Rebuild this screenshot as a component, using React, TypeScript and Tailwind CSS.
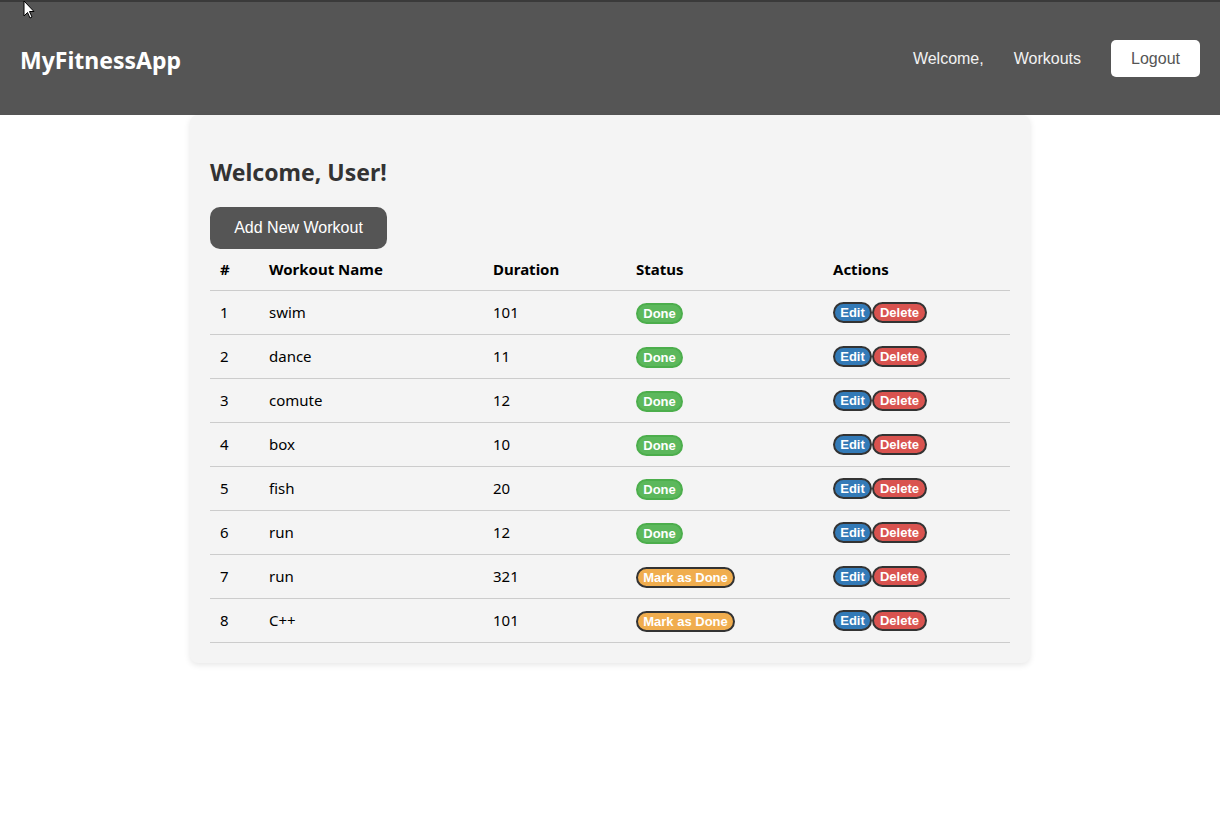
import React from "react"

type Workout = { id: number; name: string; duration: number; done: boolean }

const workouts: Workout[] = [
  { id: 1, name: "swim", duration: 101, done: true },
  { id: 2, name: "dance", duration: 11, done: true },
  { id: 3, name: "comute", duration: 12, done: true },
  { id: 4, name: "box", duration: 10, done: true },
  { id: 5, name: "fish", duration: 20, done: true },
  { id: 6, name: "run", duration: 12, done: true },
  { id: 7, name: "run", duration: 321, done: false },
  { id: 8, name: "C++", duration: 101, done: false },
]

const segoe = "font-['Segoe_UI','Noto_Sans',sans-serif]"
const arial = "font-['Liberation_Sans',Arial,sans-serif]"

function Pill({ className, children }: { className: string; children: React.ReactNode }) {
  return (
    <button
      className={`${arial} h-[21px] whitespace-nowrap rounded-full border-2 px-0 text-[13px] font-bold leading-none text-white ${className}`}
    >
      {children}
    </button>
  )
}

export default function App() {
  return (
    <div className="relative min-h-[834px] bg-white">
      <svg className="absolute left-[23px] top-0 z-10" width="12" height="19" viewBox="0 0 12 19">
        <path d="M1 1 L1 16 L4.5 12.5 L7 18 L9 17 L6.5 11.5 L11 11.5 Z" fill="#fff" stroke="#000" strokeWidth="1" />
      </svg>

      <header className="flex h-[115px] items-center justify-between border-t-2 border-[#3a3a3a] bg-[#555555] px-5">
        <h1 className={`${segoe} mt-1 text-[23px] font-bold text-white`}>MyFitnessApp</h1>
        <nav className={`${arial} flex items-center text-[16px] text-[#f2f2f2]`}>
          <a className="mr-[30px] mt-px">Welcome,</a>
          <a className="mr-[30px] mt-px">Workouts</a>
          <button className="h-[37px] w-[89px] rounded-[5px] bg-white text-[16px] text-[#555]">Logout</button>
        </nav>
      </header>

      <main className="mx-auto w-[840px] rounded-lg bg-[#f4f4f4] px-5 pb-5 pt-[40px] shadow-[0_2px_6px_rgba(0,0,0,0.1)]">
        <h2 className={`${segoe} text-[23px] font-bold leading-[34px] text-[#333]`}>Welcome, User!</h2>
        <button
          className={`${arial} mt-[18px] h-[42px] w-[177px] rounded-[10px] bg-[#555555] text-[16px] text-white`}
        >
          Add New Workout
        </button>

        <table className={`${segoe} w-full border-collapse text-[15px] text-black`}>
          <thead>
            <tr className="h-[41px] border-b border-[#cccccc] text-left">
              <th className="w-[49px] px-[10px] font-bold">#</th>
              <th className="w-[224px] px-[10px] font-bold">Workout Name</th>
              <th className="w-[143px] px-[10px] font-bold">Duration</th>
              <th className="w-[197px] px-[10px] font-bold">Status</th>
              <th className="px-[10px] font-bold">Actions</th>
            </tr>
          </thead>
          <tbody>
            {workouts.map((w) => (
              <tr key={w.id} className="h-[44px] border-b border-[#cccccc]">
                <td className="px-[10px]">{w.id}</td>
                <td className="px-[10px]">{w.name}</td>
                <td className="px-[10px]">{w.duration}</td>
                <td className="px-[10px]">
                  {w.done ? (
                    <Pill className="w-[47px] border-[#4cae4c] bg-[#5cb85c]">Done</Pill>
                  ) : (
                    <Pill className="w-[99px] border-[#333] bg-[#f0ad4e]">Mark as Done</Pill>
                  )}
                </td>
                <td className="px-[10px]">
                  <div className="flex">
                    <Pill className="w-[39px] border-[#333] bg-[#337ab7]">Edit</Pill>
                    <Pill className="w-[55px] border-[#333] bg-[#d9534f]">Delete</Pill>
                  </div>
                </td>
              </tr>
            ))}
          </tbody>
        </table>
      </main>
    </div>
  )
}
